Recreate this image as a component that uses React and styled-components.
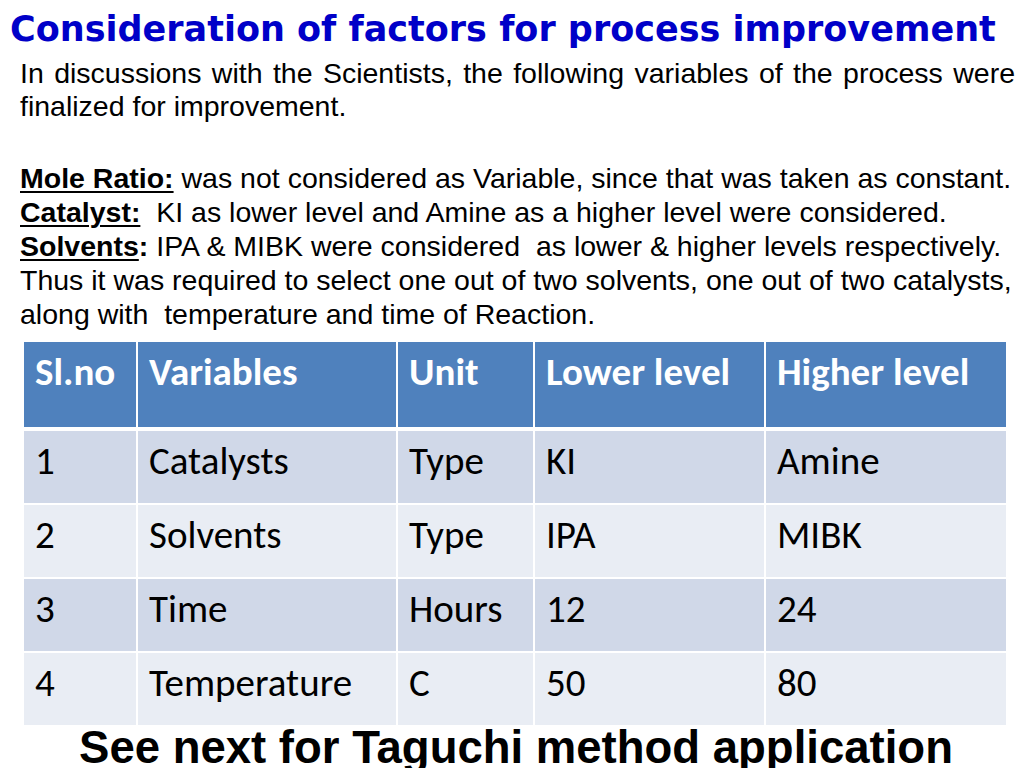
import React from "react";
import styled, { createGlobalStyle } from "styled-components";

const GlobalStyle = createGlobalStyle`
  html, body {
    margin: 0;
    padding: 0;
    background: #ffffff;
  }
`;

const Slide = styled.div`
  width: 1024px;
  height: 768px;
  overflow: hidden;
  display: flex;
  flex-direction: column;
  background: #ffffff;
`;

const Title = styled.h1`
  margin: 9px 0 0 10px;
  font-family: "DejaVu Sans", Verdana, sans-serif;
  font-weight: bold;
  font-size: 35px;
  line-height: 40px;
  color: #0000c8;
  letter-spacing: 0;
  white-space: nowrap;
`;

const Text = styled.div`
  margin: ${(p) => p.$top}px 9px 0 20px;
  font-family: "Liberation Sans", Arial, sans-serif;
  font-size: 28.5px;
  line-height: ${(p) => p.$lh}px;
  color: #000000;
`;

const Line = styled.div`
  white-space: pre;
  ${(p) =>
    p.$justify &&
    `
    white-space: normal;
    text-align: justify;
    text-align-last: justify;
  `}
`;

const Label = styled.span`
  font-weight: bold;
  text-decoration: underline;
  text-decoration-thickness: 2px;
  text-underline-offset: 3px;
`;

const Bold = styled.span`
  font-weight: bold;
`;

const Grid = styled.div`
  margin: 11px 0 0 24px;
  width: 982px;
  display: grid;
  grid-template-columns: 112px 258px 135px 229px 240px;
  grid-template-rows: 87px repeat(4, 72px);
  column-gap: 2px;
  row-gap: 2px;
  background: #ffffff;
`;

const Cell = styled.div`
  background: ${(p) =>
    p.$head ? "#4f81bd" : p.$odd ? "#d0d8e8" : "#e9edf4"};
  color: ${(p) => (p.$head ? "#ffffff" : "#000000")};
  font-family: Carlito, Lato, "Open Sans", sans-serif;
  font-weight: ${(p) => (p.$head ? "bold" : "normal")};
  font-size: 39px;
  line-height: 44px;
  padding: 8px 0 0 11px;
  margin-bottom: ${(p) => (p.$head ? "2px" : "0")};
  white-space: nowrap;
`;

const Footer = styled.div`
  margin-top: 3px;
  text-align: center;
  padding-left: 8px;
  font-family: "Liberation Sans", Arial, sans-serif;
  font-weight: bold;
  font-size: 45.5px;
  line-height: 40px;
  color: #000000;
  white-space: nowrap;
`;

const head = ["Sl.no", "Variables", "Unit", "Lower level", "Higher level"];
const rows = [
  ["1", "Catalysts", "Type", "KI", "Amine"],
  ["2", "Solvents", "Type", "IPA", "MIBK"],
  ["3", "Time", "Hours", "12", "24"],
  ["4", "Temperature", "C", "50", "80"],
];

export default function App() {
  return (
    <Slide>
      <GlobalStyle />
      <Title>Consideration of factors for process improvement</Title>

      <Text $top={8} $lh={33}>
        <Line $justify>
          In discussions with the Scientists, the following variables of the
          process were
        </Line>
        <Line>finalized for improvement.</Line>
      </Text>

      <Text $top={38} $lh={34}>
        <Line>
          <Label>Mole Ratio:</Label> was not considered as Variable, since that
          was taken as constant.
        </Line>
        <Line>
          <Label>Catalyst:</Label>{"  "}KI as lower level and Amine as a higher
          level were considered.
        </Line>
        <Line>
          <Label>Solvents</Label>
          <Bold>:</Bold> IPA &amp; MIBK were considered{"  "}as lower &amp;
          higher levels respectively.
        </Line>
        <Line>
          Thus it was required to select one out of two solvents, one out of
          two catalysts,
        </Line>
        <Line>along with{"  "}temperature and time of Reaction.</Line>
      </Text>

      <Grid>
        {head.map((h) => (
          <Cell key={h} $head>
            {h}
          </Cell>
        ))}
        {rows.map((r, i) =>
          r.map((c, j) => (
            <Cell key={i + "-" + j} $odd={i % 2 === 0}>
              {c}
            </Cell>
          ))
        )}
      </Grid>

      <Footer>See next for Taguchi method application</Footer>
    </Slide>
  );
}
